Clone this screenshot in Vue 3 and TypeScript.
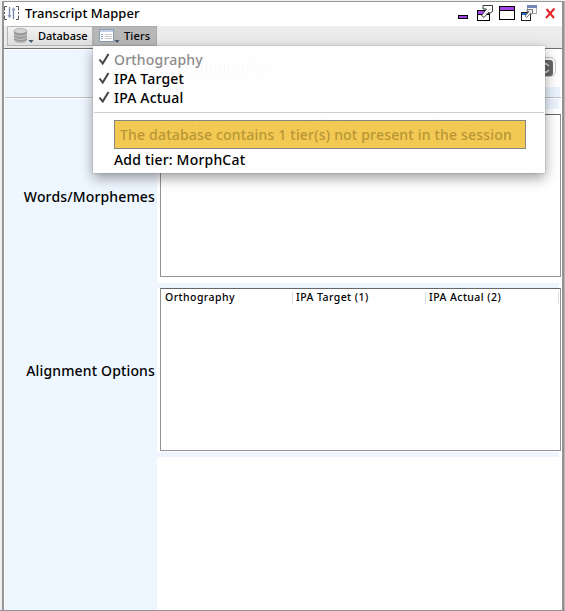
<script setup lang="ts">
interface TierItem {
  label: string
  disabled: boolean
}

const tiers: TierItem[] = [
  { label: 'Orthography', disabled: true },
  { label: 'IPA Target', disabled: false },
  { label: 'IPA Actual', disabled: false },
]
const columns: string[] = ['Orthography', 'IPA Target (1)', 'IPA Actual (2)']
</script>

<template>
  <div class="window">
    <header class="titlebar">
      <svg class="app-icon" width="16" height="16" viewBox="0 0 16 16" fill="none">
        <path d="M3 1.500H.5v4M.5 7v2M.5 10.500v4H3M12 1.500h2.500v4M14.500 7v2M14.500 10.500v4H12" stroke="#555" />
        <path d="M5.500 2v10M9.500 4v10" stroke="#7284a8" stroke-width="1.300" />
        <path d="M3.500 10l2 3.500 2-3.500zM7.500 5.500l2-3.500 2 3.500z" fill="#8d9dbe" />
      </svg>
      <h1 class="title"><span>Transcript Mapper</span></h1>
      <div class="controls">
        <svg width="100" height="18" viewBox="0 0 100 18" fill="none">
          <rect x=".5" y="10.500" width="9" height="3" fill="#a642e8" stroke="#000" />
          <rect x="19.500" y="5.500" width="12" height="10" fill="#fff" stroke="#000" />
          <path d="M20 6h11v3H20z" fill="#a642e8" />
          <path d="M20 9.500h11" stroke="#000" />
          <path d="M23.500 10.500l5-6.500H25V.5h9.500v6L31 9V7l-5 5.500z" fill="#fff" stroke="#222" stroke-width=".9" />
          <path d="M27 9.500l5.500-6.500" stroke="#bbb" stroke-width=".7" />
          <rect x="41.500" y="1.500" width="15" height="13" fill="#fff" stroke="#000" />
          <path d="M42 2h14v3H42z" fill="#a642e8" />
          <path d="M42 5.500h14" stroke="#000" />
          <rect x="69.500" y=".5" width="9" height="8" fill="#f7f7f7" stroke="#aaa" />
          <path d="M69 0h10v3H69z" fill="#7187b5" />
          <rect x="63.500" y="7.500" width="9" height="8" fill="#fff" stroke="#222" />
          <path d="M64 8h8v2H64z" fill="#2865c7" />
          <path d="M67 11l4-4.500h-2V4.500h5.500v4l-2 1V8.500l-4 4z" fill="#eee" stroke="#666" stroke-width=".9" />
          <path d="M88.500 4l7.500 9M96.500 3.500l-8.500 9.500" stroke="#e32226" stroke-width="2" />
        </svg>
      </div>
    </header>

    <nav class="toolbar">
      <button class="tool database">
        <svg width="22" height="18" viewBox="0 0 22 18">
          <path d="M1 4v9c0 4 13 4 13 0V4z" fill="#999" />
          <path d="M1 7c1 3 12 3 13 0M1 10c1 3 12 3 13 0M1 13c1 3 12 3 13 0" fill="none" stroke="#d8d8d8" stroke-width=".8" />
          <ellipse cx="7.500" cy="4" rx="6.500" ry="2.500" fill="#d6d6d6" stroke="#999" stroke-width=".7" />
          <path d="M15.500 13h5L18 16z" fill="#46566a" />
        </svg>
        <span>Database</span>
      </button>
      <button class="tool tiers">
        <svg width="22" height="18" viewBox="0 0 22 18">
          <rect x=".5" y="2.500" width="14" height="12" fill="#fff" stroke="#8a9dbd" />
          <path d="M1 3h13v2H1z" fill="#c3d0e4" />
          <path d="M2 7.500h2M2 9.500h2M2 11.500h2" stroke="#90a4c8" />
          <path d="M6 7.500h7M6 9.500h7M6 11.500h7" stroke="#c8c8c8" />
          <path d="M15.500 13h5L18 16z" fill="#46566a" />
        </svg>
        <span>Tiers</span>
      </button>
    </nav>

    <main class="form">
      <section class="row key-row">
        <div class="label"></div>
        <div class="field select-field">
          <div class="select-end">
            <svg width="14" height="16" viewBox="0 0 14 16">
              <rect width="14" height="16" rx="3" fill="#666" />
              <path d="M4 6l3-2.500L10 6M4 10l3 2.500 3-2.500" fill="none" stroke="#ddd" stroke-width="1.500" />
            </svg>
          </div>
        </div>
      </section>
      <div class="separator"></div>
      <section class="row words-row">
        <div class="label"><span>Words/Morphemes</span></div>
        <div class="field"><div class="table"></div></div>
      </section>
      <section class="row align-row">
        <div class="label"><span>Alignment Options</span></div>
        <div class="field">
          <div class="table">
            <div class="thead">
              <div v-for="c in columns" :key="c" class="th">{{ c }}</div>
            </div>
          </div>
        </div>
      </section>
      <section class="row rest">
        <div class="label"></div>
        <div class="field"></div>
      </section>
    </main>

    <div class="menu">
      <div v-for="t in tiers" :key="t.label" class="item" :class="{ disabled: t.disabled }">
        <svg class="check" width="13" height="14" viewBox="0 0 13 14" fill="none">
          <path d="M1.500 7.500l3.200 4L10.500 2" stroke="#444" stroke-width="2" />
        </svg>
        <span>{{ t.label }}</span>
      </div>
      <div class="rule"></div>
      <div class="notice"><span>The database contains 1 tier(s) not present in the session</span></div>
      <div class="item add"><span>Add tier: MorphCat</span></div>
      <span class="ghost ghost-key">Key tier</span>
      <span class="ghost ghost-value">Orthography</span>
      <span class="ghost ghost-col-a">Orthography</span>
      <span class="ghost ghost-col-b">IPA Target</span>
      <span class="ghost ghost-col-c">IPA Actual</span>
    </div>
  </div>
</template>

<style>
body {
  background: #fff;
  overflow: hidden;
}
</style>

<style scoped>
* {
  box-sizing: border-box;
}
.window {
  position: relative;
  display: flex;
  flex-direction: column;
  width: 565px;
  height: 611px;
  padding-left: 4px;
  padding-right: 3px;
  background: linear-gradient(90deg, #efefef 2px, #969696 2px, #969696 4px, #fff 4px, #fff 562px, #929292 562px, #929292 564px, #b5b5b5 564px);
  border-top: 1px solid #f0f0f0;
  border-bottom: 1px solid #929292;
  font-family: "Noto Sans", "Open Sans", sans-serif;
  font-weight: 500;
  color: #000;
  white-space: nowrap;
}
.titlebar {
  display: flex;
  height: 25px;
  border-top: 1px solid #969696;
  background: #fff;
}
.app-icon {
  margin-top: 3px;
}
.title {
  flex: 1;
  margin: 0 0 0 5px;
  font-size: 13px;
  font-weight: 500;
  line-height: 22px;
  letter-spacing: .02px;
}
.controls {
  width: 104px;
  padding-top: 3px;
}
.toolbar {
  display: flex;
  height: 23px;
  padding-left: 3px;
  background: linear-gradient(#eee, #e8e8e8);
  border-bottom: 1px solid #707070;
}
.tool {
  display: flex;
  height: 20px;
  padding: 0 0 0 5px;
  border: 1px solid #b4b4b4;
  background: linear-gradient(#f3f3f3, #dedede);
  font: 500 11px/17px "Noto Sans", sans-serif;
  color: #000;
}
.database {
  width: 86px;
}
.tool span {
  margin-left: 3px;
}
.tiers {
  width: 64px;
  padding-left: 5px;
  background: #b8b8b8;
  border-color: #ababab;
  letter-spacing: .15px;
}
.form {
  display: flex;
  flex-direction: column;
  flex: 1;
  padding: 1px 2px 0 1px;
}
.row {
  display: flex;
}
.label {
  display: flex;
  align-items: center;
  justify-content: flex-end;
  width: 152px;
  padding-right: 2px;
  background: #eef6ff;
  font-size: 14px;
  letter-spacing: .15px;
}
.field {
  flex: 1;
}
.key-row {
  height: 47px;
}
.select-field {
  display: flex;
  justify-content: flex-end;
  padding: 7px 4px 0 0;
  background: linear-gradient(#fff 37px, #eaf4ff 37px);
}
.select-end {
  width: 30px;
  height: 20px;
  padding: 1px 2px 0 12px;
  border: 1px solid #c7c7c7;
  border-radius: 6px;
  background: #fff;
}
.separator {
  height: 2px;
  margin-right: -1px;
  background: linear-gradient(#bfc3c7 1px, #fff 1px);
}
.words-row {
  height: 189px;
}
.words-row .field {
  padding: 15px 0 11px 3px;
  margin-right: -2px;
  background: linear-gradient(#eaf4ff, #eaf4ff) 0 0 / 402px 10px no-repeat, linear-gradient(#edf6ff, #edf6ff) 0 184px / 402px 5px no-repeat;
}
.words-row .label {
  padding-top: 6px;
}
.align-row {
  height: 169px;
}
.align-row .field {
  padding: 0 0 6px 3px;
  margin-right: -2px;
  background: linear-gradient(#edf6ff, #edf6ff) 0 164px / 402px 5px no-repeat;
}
.align-row .label {
  padding-bottom: 4px;
}
.table {
  height: 100%;
  width: 401px;
  border: 1px solid #929292;
  border-top-color: #666;
  background: #fff;
}
.thead {
  display: grid;
  grid-template-columns: 132px 133px 133px;
  height: 16px;
}
.th {
  height: 12px;
  margin-top: 3px;
  padding-left: 3px;
  border-right: 1px solid #ddd;
  font-size: 10.500px;
  line-height: 11px;
  letter-spacing: .44px;
}
.th:first-child {
  padding-left: 4px;
}
.rest {
  flex: 1;
}
.menu {
  position: absolute;
  left: 93px;
  top: 45px;
  width: 452px;
  height: 127px;
  padding-top: 4px;
  background: #fefefe;
  box-shadow: 0 0 1px #777, 0 5px 12px rgba(0, 0, 0, .38);
  font-size: 14px;
  letter-spacing: .19px;
}
.item {
  display: flex;
  height: 19px;
  padding-left: 5px;
  line-height: 19px;
}
.item span {
  margin-left: 3px;
}
.check {
  margin-top: 2px;
}
.disabled {
  color: #8c8c8c;
}
.rule {
  height: 1px;
  margin: 5px 1px 7px;
  background: #ccc;
}
.notice {
  width: 412px;
  height: 29px;
  margin-left: 21px;
  padding-left: 5px;
  border: 1px solid #858585;
  background: #f2c953;
  color: #b99635;
  line-height: 27px;
}
.add {
  padding-left: 18px;
  margin-top: 1px;
}
.ghost {
  position: absolute;
  color: rgba(0, 0, 0, .03);
  line-height: 16px;
}
.ghost-key {
  left: 12px;
  top: 14px;
}
.ghost-value {
  left: 84px;
  top: 14px;
}
.ghost-col-a,
.ghost-col-b,
.ghost-col-c {
  top: 68px;
  font-size: 10.500px;
  letter-spacing: .42px;
}
.ghost-col-a {
  left: 72px;
}
.ghost-col-b {
  left: 206px;
}
.ghost-col-c {
  left: 338px;
}
</style>
